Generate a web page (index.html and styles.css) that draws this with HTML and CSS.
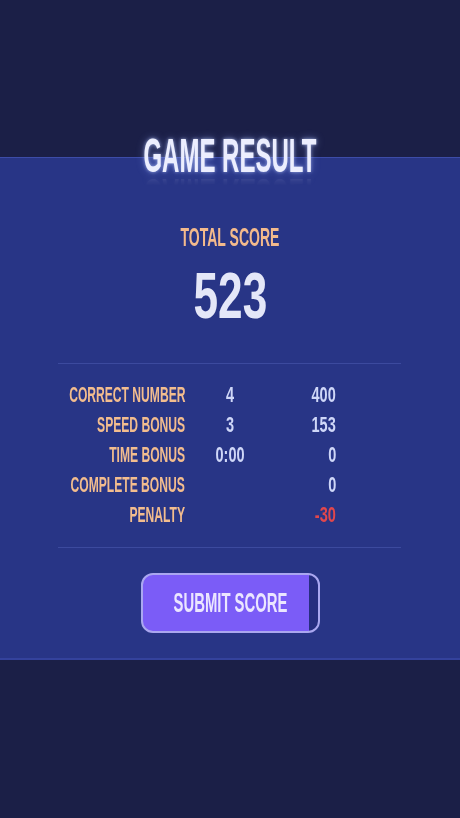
FILE: index.html
```html
<!DOCTYPE html>
<html>
<head>
<meta charset="utf-8">
<title>Game Result</title>
<link rel="stylesheet" href="styles.css">
</head>
<body>
<div class="top"></div>
<section class="panel">
  <h1 class="title"><span class="sx-title">GAME RESULT</span></h1>
  <div class="total-label"><span class="sx">TOTAL SCORE</span></div>
  <div class="total-value"><span class="sx-num">523</span></div>
  <div class="divider"></div>
  <div class="rows">
    <div class="lbl"><span class="sx">CORRECT NUMBER</span></div>
    <div class="mid"><span class="sx-val">4</span></div>
    <div class="pts"><span class="sx-val">400</span></div>

    <div class="lbl"><span class="sx">SPEED BONUS</span></div>
    <div class="mid"><span class="sx-val">3</span></div>
    <div class="pts"><span class="sx-val">153</span></div>

    <div class="lbl"><span class="sx">TIME BONUS</span></div>
    <div class="mid"><span class="sx-val">0:00</span></div>
    <div class="pts"><span class="sx-val">0</span></div>

    <div class="lbl"><span class="sx">COMPLETE BONUS</span></div>
    <div class="mid"></div>
    <div class="pts"><span class="sx-val">0</span></div>

    <div class="lbl"><span class="sx">PENALTY</span></div>
    <div class="mid"></div>
    <div class="pts neg"><span class="sx-val">-30</span></div>
  </div>
  <div class="divider divider-2"></div>
  <button class="submit"><span class="sx">SUBMIT SCORE</span></button>
</section>
</body>
</html>
```

FILE: styles.css
```css
html, body {
  margin: 0;
  padding: 0;
}
body {
  background: #1b1f47;
  height: 818px;
  overflow: hidden;
  font-family: "Liberation Sans", Arial, sans-serif;
  font-weight: 700;
}
.top {
  height: 157px;
}
.panel {
  background: #283586;
  border-top: 1px solid #3d4ca8;
  border-bottom: 2px solid #34429c;
  display: flex;
  flex-direction: column;
  align-items: center;
  padding-bottom: 25px;
}
.sx, .sx-title, .sx-num, .sx-val {
  display: inline-block;
  white-space: nowrap;
  flex: none;
}
.title {
  margin: -26px 0 0 0;
  font-size: 48px;
  line-height: 48px;
  font-weight: 700;
  color: #eceefe;
  -webkit-box-reflect: below -9px linear-gradient(transparent 70%, rgba(255,255,255,0.18));
}
.sx-title {
  transform: scaleX(0.5);
  text-shadow: 0 0 5px rgba(190, 205, 255, 0.7), 0 0 12px rgba(150, 170, 255, 0.45);
}
.total-label {
  margin-top: 44px;
  font-size: 25.5px;
  line-height: 26px;
  color: #f3ba8c;
}
.sx {
  transform: scaleX(0.55);
}
.total-value {
  margin-top: 14px;
  font-size: 64px;
  line-height: 64px;
  color: #e4e7f8;
}
.sx-num {
  transform: scaleX(0.69);
}
.divider {
  align-self: stretch;
  margin: 35px 59px 0 58px;
  height: 1px;
  background: #3c4a9e;
}
.divider-2 {
  margin-top: 17px;
}
.rows {
  align-self: stretch;
  margin: 16px 0 0 58px;
  display: grid;
  grid-template-columns: 127px 90px 61px;
  grid-auto-rows: 30px;
  font-size: 22px;
  line-height: 30px;
}
.lbl, .mid, .pts {
  display: flex;
  min-width: 0;
}
.lbl {
  justify-content: flex-end;
  color: #f3bd8e;
}
.lbl .sx {
  transform-origin: right center;
}
.mid {
  justify-content: center;
  color: #cfd7f8;
}
.pts {
  justify-content: flex-end;
  color: #cfd7f8;
}
.sx-val {
  transform: scaleX(0.66);
}
.pts .sx-val {
  transform-origin: right center;
}
.pts.neg {
  color: #e2474c;
}
.submit {
  margin-top: 25px;
  width: 179px;
  height: 60px;
  box-sizing: border-box;
  border: 2px solid #aaa7f0;
  border-radius: 12px;
  background: linear-gradient(to right, #7b5cf7 calc(100% - 9px), #262e80 calc(100% - 9px));
  color: #ebe6ff;
  font-family: "Liberation Sans", Arial, sans-serif;
  font-weight: 700;
  font-size: 27px;
  line-height: 56px;
  padding: 0;
  display: flex;
  align-items: center;
  justify-content: center;
}
```
